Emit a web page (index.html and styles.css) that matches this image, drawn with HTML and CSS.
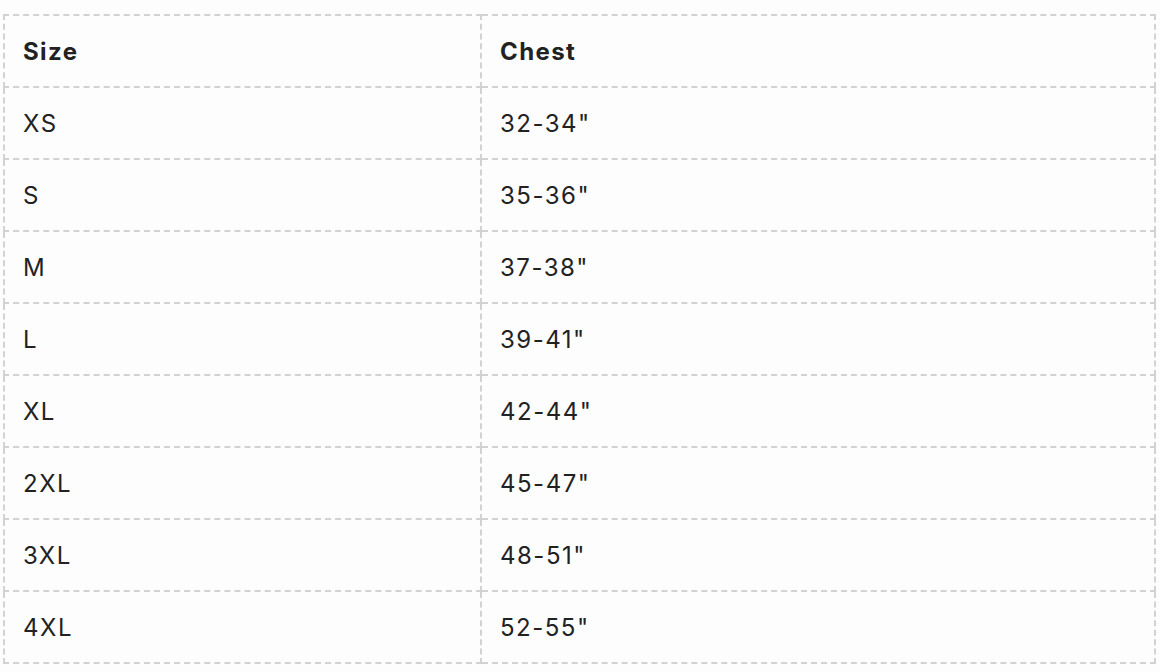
FILE: index.html
```html
<!DOCTYPE html>
<html lang="en">
<head>
<meta charset="utf-8">
<title>Size chart</title>
<link rel="stylesheet" href="styles.css">
</head>
<body>
<table class="size-table">
  <thead>
    <tr><th>Size</th><th>Chest</th></tr>
  </thead>
  <tbody>
    <tr><td>XS</td><td>32-34"</td></tr>
    <tr><td>S</td><td>35-36"</td></tr>
    <tr><td>M</td><td>37-38"</td></tr>
    <tr><td>L</td><td>39-41"</td></tr>
    <tr><td>XL</td><td>42-44"</td></tr>
    <tr><td>2XL</td><td>45-47"</td></tr>
    <tr><td>3XL</td><td>48-51"</td></tr>
    <tr><td>4XL</td><td>52-55"</td></tr>
  </tbody>
</table>
</body>
</html>
```
FILE: styles.css
```css
html, body {
  margin: 0;
  background: #fdfdfd;
}
body {
  padding: 14px 5px 0 3px;
  font-family: Inter, "Noto Sans", sans-serif;
  color: #222;
}
.size-table {
  width: 1153px;
  border-collapse: collapse;
  font-size: 24px;
  letter-spacing: 1.5px;
}
.size-table th,
.size-table td {
  border: 2px dashed #d2d2d2;
  height: 72px;
  padding: 1px 18px 0;
  text-align: left;
  vertical-align: middle;
  box-sizing: border-box;
}
.size-table th {
  font-weight: 700;
  letter-spacing: 1.4px;
}
.size-table td {
  font-weight: 400;
}
.size-table th:first-child,
.size-table td:first-child {
  width: 477px;
}
```
